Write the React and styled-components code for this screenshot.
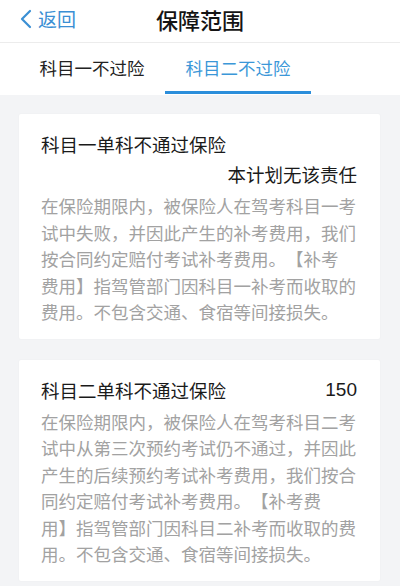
import React from 'react';
import styled, { createGlobalStyle } from 'styled-components';

const GlobalStyle = createGlobalStyle`
    body {
        margin: 0;
        background: #f3f4f6;
        font-family: "Noto Sans CJK SC", "Noto Sans", sans-serif;
        text-spacing-trim: space-all;
    }
`;

const Page = styled.div`
    width: 400px;
    min-height: 586px;
    background: #f3f4f6;
`;

const NavBar = styled.div`
    display: grid;
    grid-template-columns: 1fr auto 1fr;
    align-items: center;
    height: 43px;
    padding-bottom: 5px;
    box-sizing: border-box;
    background: #fff;
    border-bottom: 1px solid #ececec;
`;

const BackButton = styled.div`
    display: flex;
    align-items: center;
    gap: 6px;
    padding-left: 19px;
    color: #3a8fd4;
    font-size: 19px;
    line-height: 24px;
`;

const Title = styled.div`
    font-size: 22px;
    font-weight: 500;
    color: #141414;
    line-height: 28px;
`;

const TabBar = styled.div`
    display: flex;
    height: 52px;
    padding-left: 19px;
    background: #fff;
`;

const Tab = styled.div`
    position: relative;
    display: flex;
    align-items: center;
    justify-content: center;
    width: 146px;
    padding-bottom: 4px;
    box-sizing: border-box;
    font-size: 17.5px;
    color: ${props => (props.active ? '#3b97d8' : '#222')};

    &::after {
        content: '';
        display: ${props => (props.active ? 'block' : 'none')};
        position: absolute;
        left: 0;
        right: 0;
        bottom: 1px;
        height: 3px;
        background: #2b8edb;
    }
`;

const Content = styled.div`
    display: flex;
    flex-direction: column;
    gap: 21px;
    padding: 19px 20px 0 19px;
`;

const Card = styled.div`
    background: #fff;
    border-radius: 2px;
    box-shadow: 0 0 2px rgba(0, 0, 0, 0.04);
    padding: 18px 23px 13px 22px;
`;

const CardHead = styled.div`
    display: flex;
    justify-content: space-between;
    align-items: center;
    font-size: 18.5px;
    line-height: 24px;
    color: #1a1a1a;
`;

const Amount = styled.span`
    font-family: "Liberation Sans", "Noto Sans CJK SC", sans-serif;
    font-size: 19px;
`;

const Note = styled.div`
    margin-top: 6px;
    text-align: right;
    font-size: 18.5px;
    line-height: 24px;
    color: #1a1a1a;
`;

const Body = styled.div`
    margin-top: 7px;
    font-size: 17.5px;
    line-height: 26.5px;
    color: #a2a2a2;
`;

const Line = styled.div`
    white-space: nowrap;
`;

const coverage = [
    {
        name: '科目一单科不通过保险',
        note: '本计划无该责任',
        lines: [
            '在保险期限内，被保险人在驾考科目一考',
            '试中失败，并因此产生的补考费用，我们',
            '按合同约定赔付考试补考费用。【补考',
            '费用】指驾管部门因科目一补考而收取的',
            '费用。不包含交通、食宿等间接损失。'
        ]
    },
    {
        name: '科目二单科不通过保险',
        amount: '150',
        lines: [
            '在保险期限内，被保险人在驾考科目二考',
            '试中从第三次预约考试仍不通过，并因此',
            '产生的后续预约考试补考费用，我们按合',
            '同约定赔付考试补考费用。【补考费',
            '用】指驾管部门因科目二补考而收取的费',
            '用。不包含交通、食宿等间接损失。'
        ]
    }
];

const BackArrow = () => (
    <svg width="13" height="20" viewBox="0 0 13 20">
        <polyline points="11,2 3,10 11,18" fill="none" stroke="#3a8fd4" strokeWidth="2.2" strokeLinecap="round" strokeLinejoin="round" />
    </svg>
);

const App = () => {
    const [active, setActive] = React.useState(1);
    return (
        <Page>
            <GlobalStyle />
            <NavBar>
                <BackButton>
                    <BackArrow />
                    返回
                </BackButton>
                <Title>保障范围</Title>
                <div />
            </NavBar>
            <TabBar>
                {['科目一不过险', '科目二不过险'].map((label, i) => (
                    <Tab key={label} active={active === i} onClick={() => setActive(i)}>
                        {label}
                    </Tab>
                ))}
            </TabBar>
            <Content>
                {coverage.map(item => (
                    <Card key={item.name}>
                        <CardHead>
                            <span>{item.name}</span>
                            {item.amount && <Amount>{item.amount}</Amount>}
                        </CardHead>
                        {item.note && <Note>{item.note}</Note>}
                        <Body>
                            {item.lines.map(line => (
                                <Line key={line}>{line}</Line>
                            ))}
                        </Body>
                    </Card>
                ))}
            </Content>
        </Page>
    );
};

export default App;
